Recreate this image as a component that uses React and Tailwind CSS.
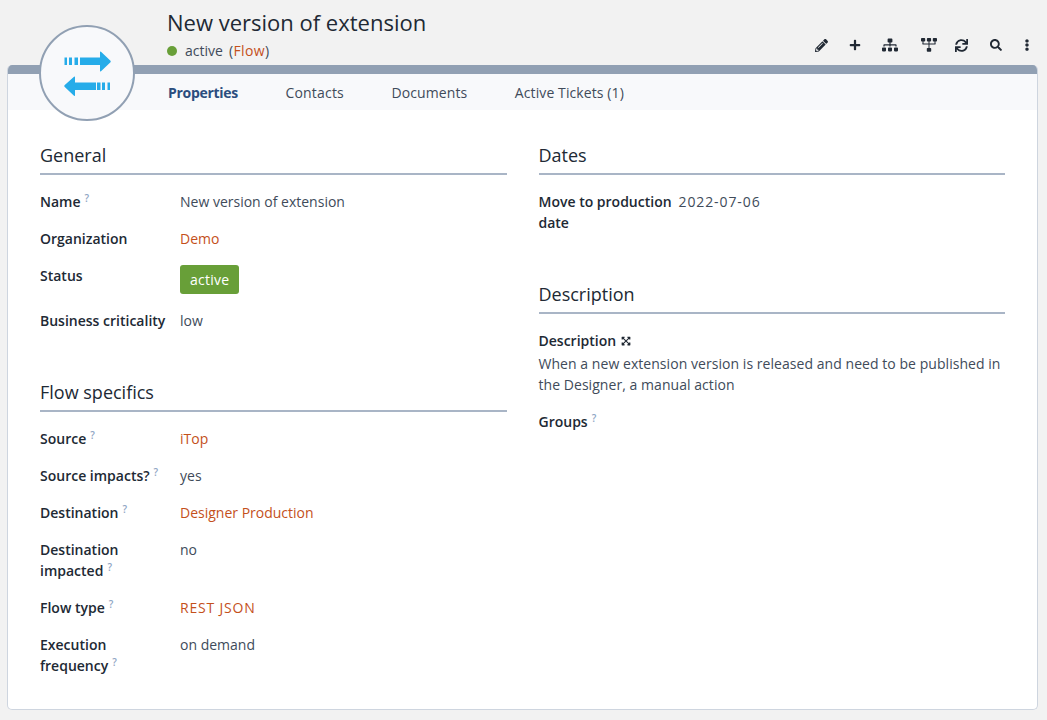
import React from "react";
import { FaPencilAlt, FaPlus, FaSitemap, FaSync, FaSearch, FaEllipsisV, FaExpandArrowsAlt } from "react-icons/fa";

const font = "font-['Open_Sans','Noto_Sans',sans-serif]";
const Q = () => <span className="ml-[4px] text-[10px] leading-none text-[#8fa6c4] align-[5px] font-semibold">?</span>;
const A = ({ children }) => <span className="text-[#c4501b]">{children}</span>;

function Field({ label, help, children, className = "" }) {
  return (
    <div className={`flex mb-[16px] ${className}`}>
      <div className="w-[140px] shrink-0 pr-[4px] font-semibold text-[#212934] leading-[21px]">
        {label}{help && <Q />}
      </div>
      <div className="text-[#404b5a] leading-[21px]">{children}</div>
    </div>
  );
}

function Section({ title, children, className = "" }) {
  return (
    <section className={className}>
      <h2 className="text-[18px] leading-[24px] text-[#212934] pb-[6px] border-b-2 border-[#a9b5c6] mb-[16px]">{title}</h2>
      {children}
    </section>
  );
}

function FlowIcon() {
  return (
    <svg width="47" height="46" viewBox="0 0 47 46" className="mt-[2px]">
      <g fill="#26ace9">
        <rect x="0.5" y="6.500" width="2.500" height="7.500" />
        <rect x="5" y="6.500" width="3" height="7.500" />
        <rect x="10.500" y="6.500" width="3.500" height="7.500" />
        <path d="M16 6.500H36V1.200Q36 0 37 .8L46.500 9.800Q47 10.500 46.500 11.200L37 20.200Q36 21 36 19.800V14H16Z" />
        <rect x="43.500" y="31.500" width="2.500" height="7.500" />
        <rect x="38" y="31.500" width="3" height="7.500" />
        <rect x="33" y="31.500" width="3.500" height="7.500" />
        <path d="M32 31.500H11V26.200Q11 25 10 25.800L.5 34.300Q0 35 .5 35.700L10 44.700Q11 45.500 11 44.300V39H32Z" />
      </g>
    </svg>
  );
}

function NetIcon() {
  return (
    <svg width="16" height="14" viewBox="0 0 16 14" fill="#212934">
      <rect x="0" y="0" width="4.200" height="3.500" rx=".8" /><rect x="5.900" y="0" width="4.200" height="3.500" rx=".8" /><rect x="11.800" y="0" width="4.200" height="3.500" rx=".8" />
      <rect x="1.500" y="5.500" width="13" height="1" /><rect x="7.500" y="3" width="1" height="8" />
      <rect x="1.500" y="3" width="1" height="3" /><rect x="13.500" y="3" width="1" height="3" />
      <rect x="5.800" y="10" width="4.400" height="3.700" rx=".8" />
    </svg>
  );
}

export default function App() {
  return (
    <div className={`${font} relative h-[720px] w-[1047px] overflow-hidden bg-[#f2f2f2] text-[14px] pl-[7px] pr-[9px] pb-[10px] flex flex-col`}>
      <header className="h-[65px] shrink-0 flex pl-[160px] pr-[5px]">
        <div className="flex-1 pt-[8px]">
          <h1 className="text-[22px] leading-[28px] text-[#212934]">New version of extension</h1>
          <div className="flex items-center mt-[5px] text-[#404b5a] leading-[20px]">
            <span className="w-[10px] h-[10px] rounded-full bg-[#689f38] mr-[8px]" />
            <span>active</span><span className="ml-[6px] tracking-[0.4px]">(<A>Flow</A>)</span>
          </div>
        </div>
        <div className="flex items-center pt-[25px] text-[#212934]">
          <FaPencilAlt className="text-[13px]" />
          <FaPlus className="text-[12px] ml-[21px]" />
          <FaSitemap className="text-[16px] ml-[21px]" />
          <span className="ml-[23px]"><NetIcon /></span>
          <FaSync className="text-[13px] ml-[18px]" />
          <FaSearch className="text-[12px] ml-[22px]" />
          <FaEllipsisV className="text-[12px] ml-[19px]" />
        </div>
      </header>

      <main className="flex-1 bg-white border border-[#ced5df] border-t-0 rounded-[5px] overflow-hidden">
        <div className="h-[9px] bg-[#91a0b3]" />
        <nav className="h-[36px] bg-[#f8f9fb] flex items-center pl-[160px] gap-[47.5px] text-[#404b5a]">
          <span className="font-bold text-[#2b4d7e] tracking-[-0.3px]">Properties</span>
          <span className="tracking-[0.2px]">Contacts</span>
          <span className="tracking-[0.1px]">Documents</span>
          <span className="tracking-[0.1px]">Active Tickets (1)</span>
        </nav>
        <div className="grid grid-cols-2 gap-[32px] px-[32px] pt-[33px]">
          <div>
            <Section title="General" className="mb-[49px]">
              <Field label="Name" help>New version of extension</Field>
              <Field label="Organization"><A>Demo</A></Field>
              <Field label="Status" className="mb-[14px]">
                <span className="inline-block bg-[#689f38] text-white rounded-[3px] px-[10px] py-[4px] leading-[21px] tracking-[0.25px]">active</span>
              </Field>
              <Field label="Business criticality">low</Field>
            </Section>
            <Section title="Flow specifics">
              <Field label="Source" help><A>iTop</A></Field>
              <Field label="Source impacts?" help>yes</Field>
              <Field label="Destination" help><A>Designer Production</A></Field>
              <Field label="Destination impacted" help>no</Field>
              <Field label="Flow type" help><span className="tracking-[0.8px]"><A>REST JSON</A></span></Field>
              <Field label="Execution frequency" help>on demand</Field>
            </Section>
          </div>
          <div>
            <Section title="Dates" className="mb-[49px]">
              <Field label="Move to production date"><span className="tracking-[0.9px]">2022-07-06</span></Field>
            </Section>
            <Section title="Description">
              <div className="mb-[16px]">
                <div className="flex items-center font-semibold text-[#212934] leading-[21px]">Description<FaExpandArrowsAlt className="ml-[5px] text-[10px]" /></div>
                <div className="text-[#404b5a] leading-[21px] mt-[2px] tracking-[0.05px]">When a new extension version is released and need to be published in the Designer, a manual action</div>
              </div>
              <div className="font-semibold text-[#212934] leading-[21px]">Groups<Q /></div>
            </Section>
          </div>
        </div>
      </main>

      <div className="absolute left-[39px] top-[25px] w-[96px] h-[96px] rounded-full bg-[#f8f9fb] border-2 border-[#91a0b3] flex items-center justify-center">
        <FlowIcon />
      </div>
    </div>
  );
}
